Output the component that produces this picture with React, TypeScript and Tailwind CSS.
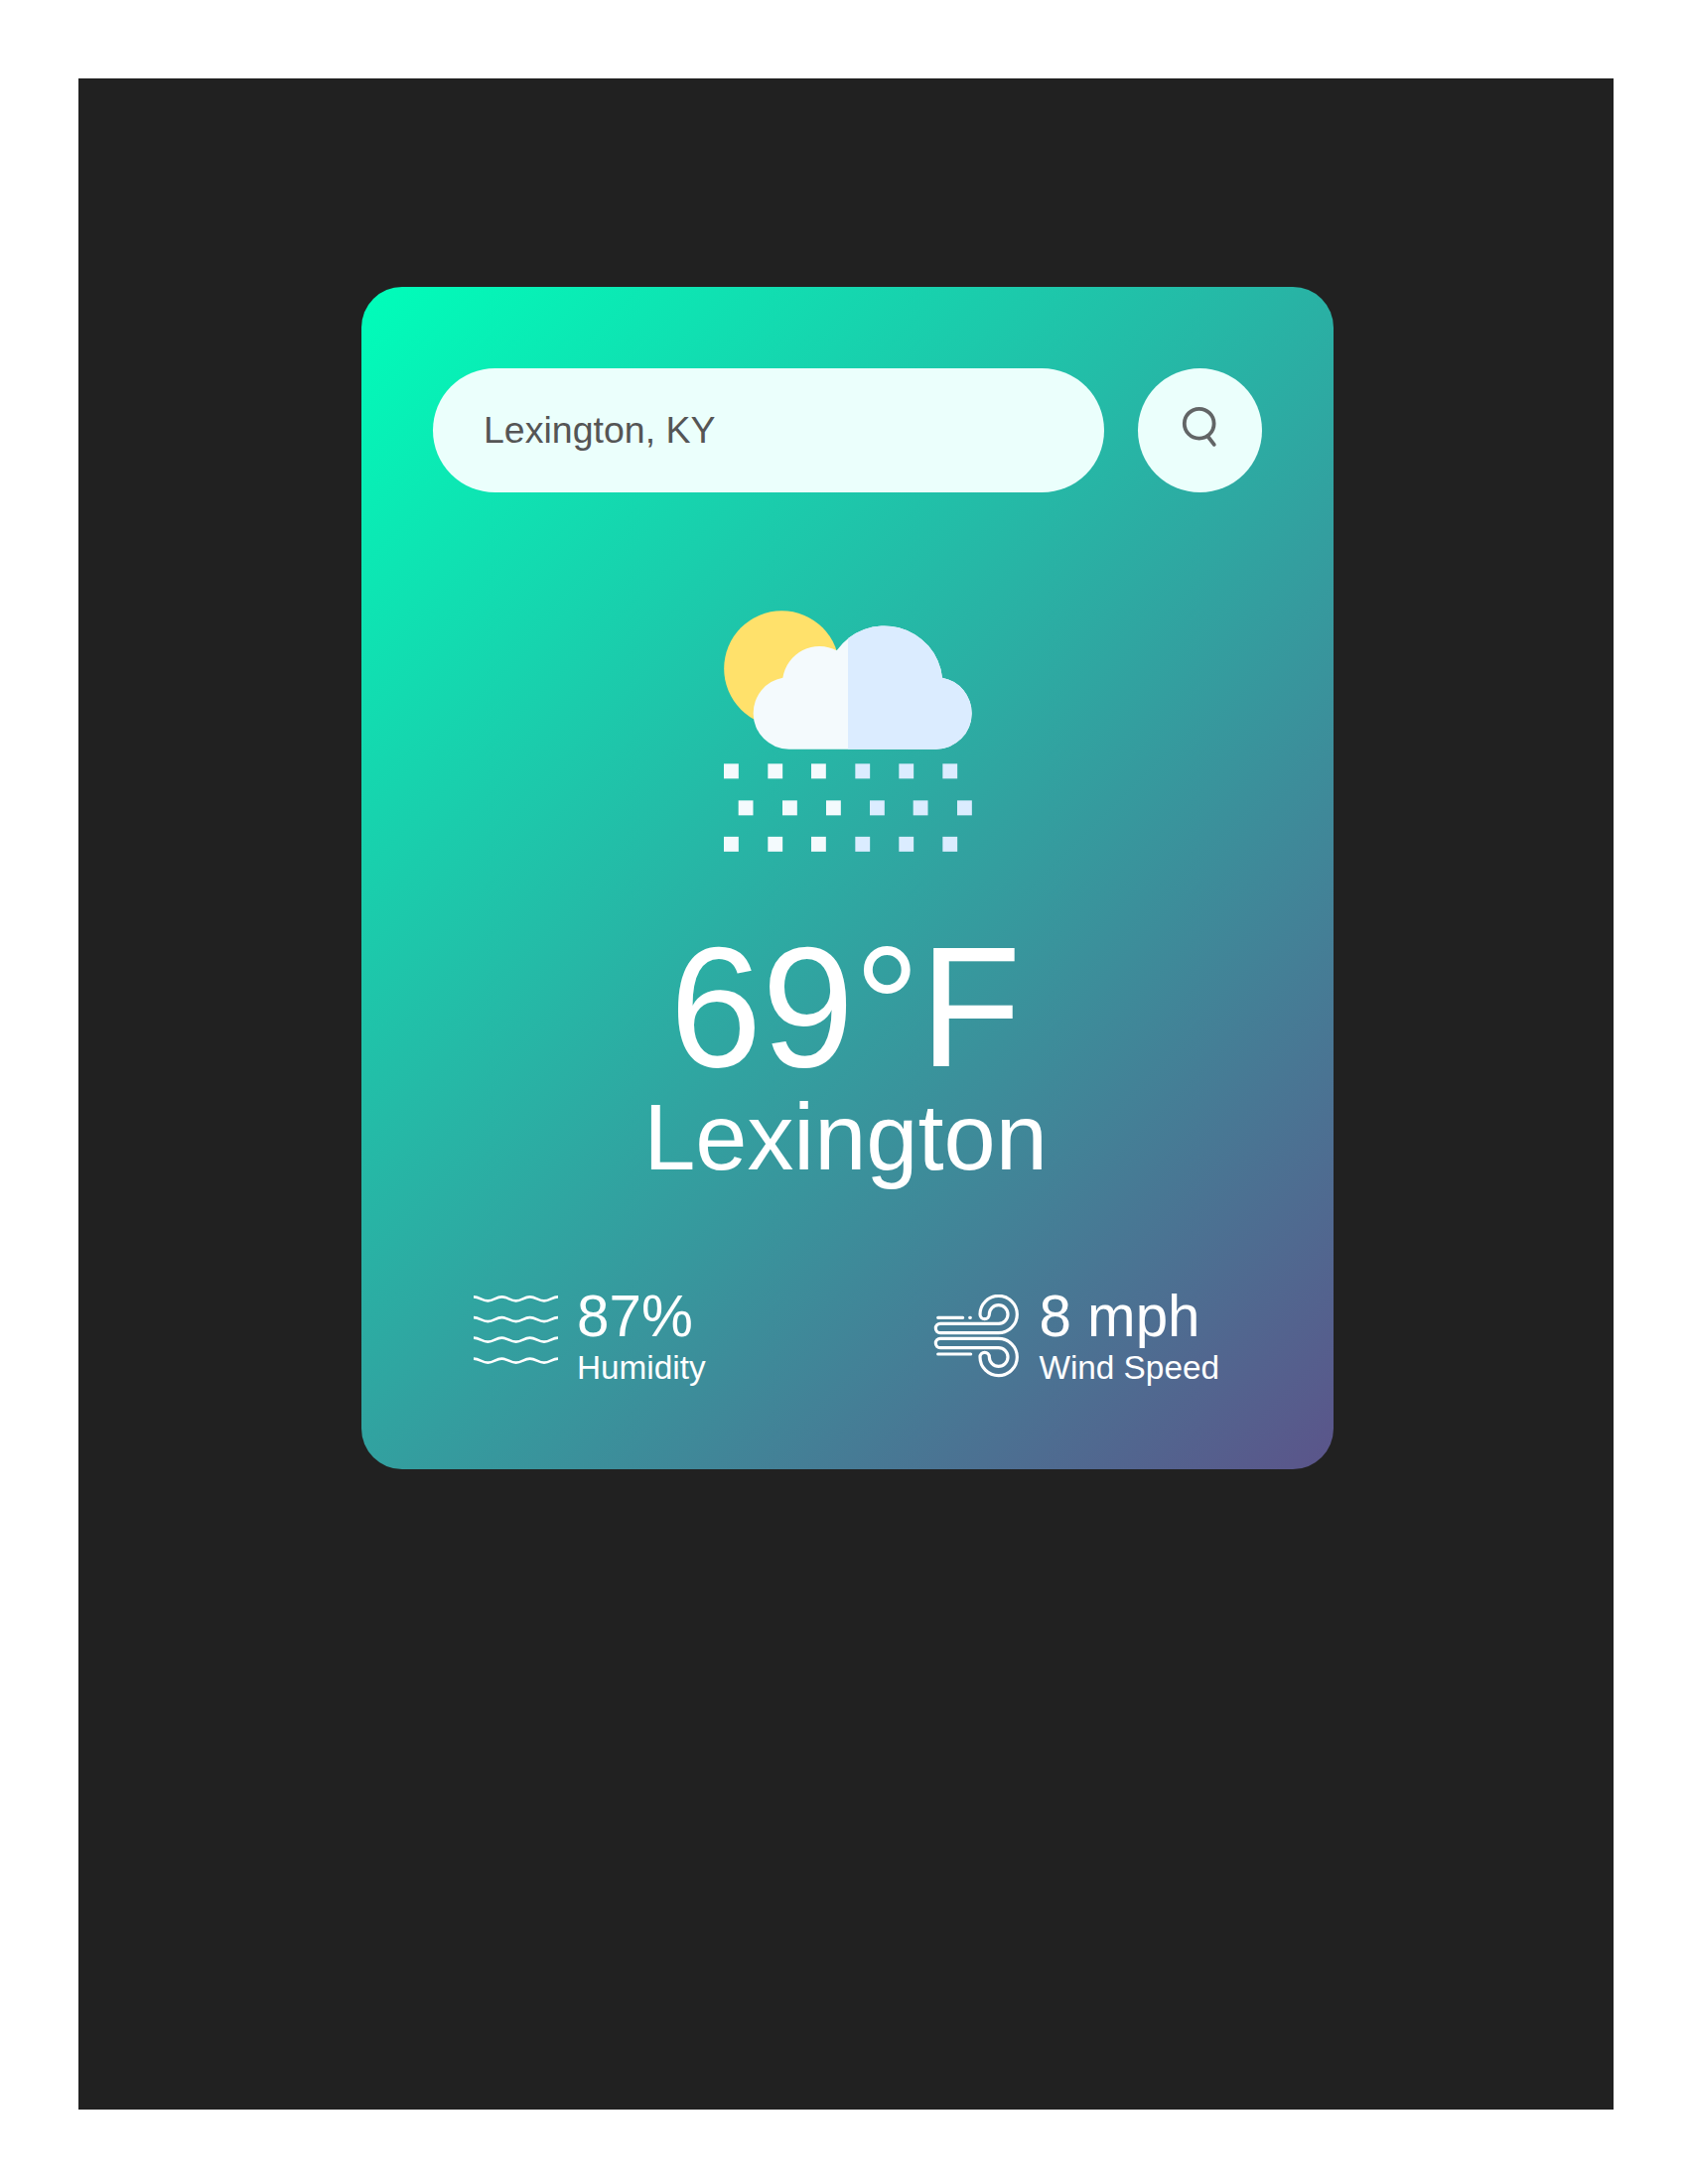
const dropRows = [
  { y: 508, xs: [57, 190, 321, 454, 586, 718] },
  { y: 619, xs: [101, 234, 366, 498, 629, 762] },
  { y: 728.5, xs: [57, 190, 321, 454, 586, 718] },
];

const cloud =
  "M254 464 A108 108 0 0 1 146 356 A109 109 0 0 1 235 248 A112 112 0 0 1 398 166 A176 176 0 0 1 717 248 A109 109 0 0 1 806 356 A108 108 0 0 1 698 464 Z";

function RainIcon() {
  return (
    <svg className="h-[247px] w-[252px]" viewBox="54 39 756 741" aria-hidden="true">
      <defs>
        <clipPath id="cloud-right">
          <rect x="432" y="60" width="400" height="420" />
        </clipPath>
      </defs>
      <circle cx="232" cy="220.5" r="174.5" fill="#ffe16b" />
      <path d={cloud} fill="#f4fafd" />
      <path d={cloud} fill="#dbecff" clipPath="url(#cloud-right)" />
      {dropRows.map((row) =>
        row.xs.map((x, i) => (
          <rect
            key={`${row.y}-${x}`}
            x={x}
            y={row.y}
            width="44.5"
            height="45"
            fill={i < 3 ? "#f4fafd" : "#dbecff"}
          />
        )),
      )}
    </svg>
  );
}

function SearchIcon() {
  return (
    <svg
      className="size-[125px]"
      viewBox="0 0 125 125"
      fill="none"
      stroke="#626566"
      strokeWidth="3.8"
      aria-hidden="true"
    >
      <circle cx="61.7" cy="55.7" r="14.9" />
      <path d="M70 68 L76.8 76.8" strokeLinecap="round" />
    </svg>
  );
}

function HumidityIcon() {
  return (
    <svg
      className="mt-3 h-[72px] w-[85px]"
      viewBox="51 72 255 216"
      fill="none"
      stroke="#fff"
      strokeWidth="8"
      aria-hidden="true"
    >
      {[0, 62.5, 124, 187].map((dy) => (
        <path
          key={dy}
          transform={`translate(0 ${dy})`}
          d="M51 79 C69 79 76 91 94 91 S118 79 136 79 S161 91 179 91 S203 79 221 79 S246 91 264 91 S288 79 306 79"
        />
      ))}
    </svg>
  );
}

function WindIcon() {
  return (
    <svg
      className="mt-3 h-[85px] w-[87px]"
      viewBox="57 72 261 255"
      fill="none"
      stroke="#fff"
      strokeWidth="9.5"
      strokeLinecap="round"
      aria-hidden="true"
    >
      <path d="M78 160 H254 A28 28 0 1 0 226 132 A14 14 0 0 1 198 132 A56 56 0 1 1 254 188 H78 A14 14 0 0 1 78 160 Z" />
      <path d="M78 233 H254 A28 28 0 1 1 226 261 A14 14 0 0 0 198 261 A56 56 0 1 0 254 205 H78 A14 14 0 0 0 78 233 Z" />
      <path d="M71 142 H146 M167 142 H169 M71 252 H170" />
    </svg>
  );
}

export default function App() {
  return (
    <div className="h-[2200px] w-[1700px] bg-white pt-[79px] pl-[79px] font-['Liberation_Sans',Arial,sans-serif]">
      <main className="h-[2046px] w-[1546px] bg-[#212121] pt-[210px] pl-[285px]">
        <section className="flex h-[1191px] w-[979px] flex-col items-center rounded-[41px] bg-[linear-gradient(135deg,#00feba,#5b548a)] pt-[82px] text-white">
          <div className="flex w-[835px] justify-between">
            <div className="flex h-[125px] w-[676px] items-center rounded-full bg-[#ebfffc] pl-[51px] text-[37.5px] leading-none text-[#555]">
              Lexington, KY
            </div>
            <button className="size-[125px] rounded-full bg-[#ebfffc]" aria-label="Search">
              <SearchIcon />
            </button>
          </div>

          <div className="mt-[117px]">
            <RainIcon />
          </div>
          <h1 className="mt-[76px] mr-1 origin-[50%_86%] scale-y-[1.035] text-[166.67px] leading-[160px]">
            69°F
          </h1>
          <h2 className="mt-1 mr-1 text-[93.75px] leading-[92px]">Lexington</h2>

          <div className="mt-[100px] flex w-full justify-between pr-[115px] pl-[113px]">
            <div className="flex gap-[19px]">
              <HumidityIcon />
              <div>
                <p className="text-[58.33px] leading-[67px]">87%</p>
                <p className="text-[33.33px] leading-[38px]">Humidity</p>
              </div>
            </div>
            <div className="flex gap-[19px]">
              <WindIcon />
              <div>
                <p className="text-[58.33px] leading-[67px]">8 mph</p>
                <p className="text-[33.33px] leading-[38px]">Wind Speed</p>
              </div>
            </div>
          </div>
        </section>
      </main>
    </div>
  );
}
